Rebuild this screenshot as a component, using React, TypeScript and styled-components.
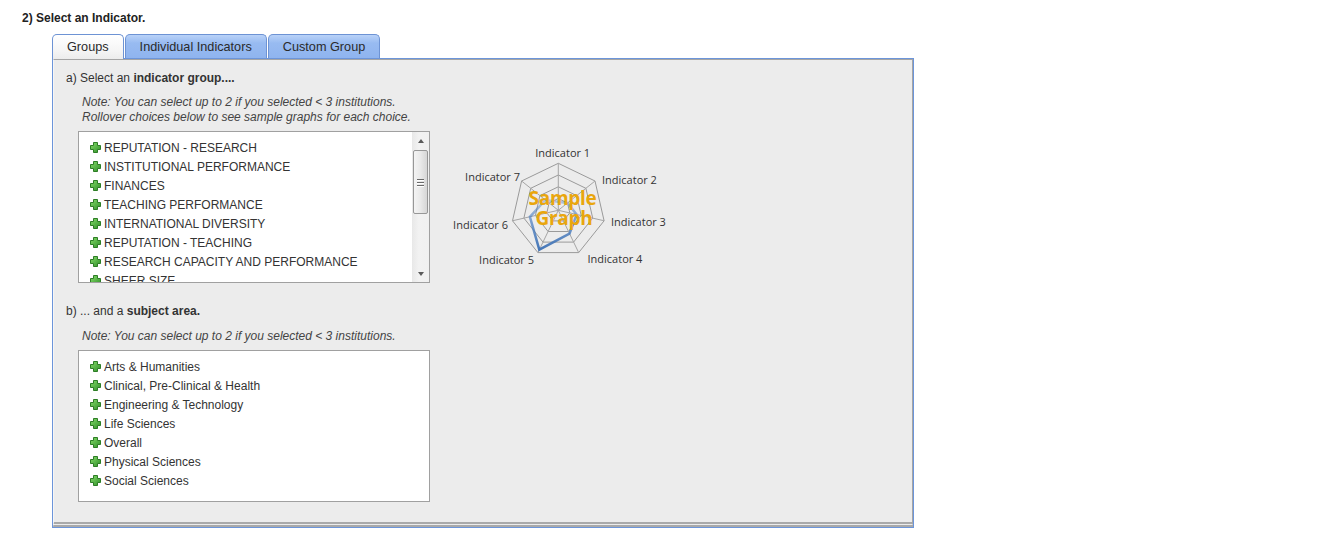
import React from "react";
import styled, { createGlobalStyle } from "styled-components";

// GLOBAL
const GlobalStyle = createGlobalStyle`
  body {
    margin: 0;
    background: #fff;
    font-family: "Liberation Sans", Arial, sans-serif;
    font-size: 12px;
    color: #333;
  }
`;

// DATA
const indicatorGroups = [
  "REPUTATION - RESEARCH",
  "INSTITUTIONAL PERFORMANCE",
  "FINANCES",
  "TEACHING PERFORMANCE",
  "INTERNATIONAL DIVERSITY",
  "REPUTATION - TEACHING",
  "RESEARCH CAPACITY AND PERFORMANCE",
  "SHEER SIZE",
  "SUSTAINABILITY",
];

const subjectAreas = [
  "Arts & Humanities",
  "Clinical, Pre-Clinical & Health",
  "Engineering & Technology",
  "Life Sciences",
  "Overall",
  "Physical Sciences",
  "Social Sciences",
];

const tabs = ["Groups", "Individual Indicators", "Custom Group"];

// STYLES
const Page = styled.div`
  padding: 11px 0 40px 22px;
`;

const Heading = styled.h2`
  margin: 0;
  font-size: 12px;
  line-height: 15px;
  font-weight: bold;
  color: #222;
`;

const TabBar = styled.div`
  display: flex;
  align-items: flex-end;
  gap: 1px;
  height: 25px;
  margin: 8px 0 -1px 30px;
  position: relative;
  z-index: 1;
`;

const Tab = styled.div<{ $active?: boolean }>`
  box-sizing: border-box;
  height: ${(p) => (p.$active ? "25px" : "24px")};
  margin-bottom: ${(p) => (p.$active ? "0" : "1px")};
  padding: 1px 14px 0;
  border: 1px solid #6d93d4;
  border-bottom: none;
  border-radius: 5px 5px 0 0;
  line-height: 22px;
  font-size: 12.7px;
  color: #2a2a2a;
  background: ${(p) =>
    p.$active
      ? "linear-gradient(#ffffff, #f6f6f6 60%, #ececec)"
      : "linear-gradient(#b9d2f8, #98bbf1 35%, #8fb4ef)"};
  cursor: pointer;
`;

const Panel = styled.div`
  margin-left: 30px;
  width: 860px;
  border: 1px solid #6c95da;
  background: #ececec;
`;

const PanelBody = styled.div`
  border-top: 1px solid #a5a5a5;
  border-right: 1px solid #a5a5a5;
  border-left: 1px solid #f6f6f6;
  border-bottom: 5px double #a9a9a9;
  padding: 11px 0 20px 12px;
`;

const SectionTitle = styled.div<{ $spaced?: boolean }>`
  margin-top: ${(p) => (p.$spaced ? "21px" : "0")};
  line-height: 15px;
  b {
    color: #333;
  }
`;

const Note = styled.div<{ $loose?: boolean }>`
  margin: ${(p) => (p.$loose ? "10px" : "9px")} 0 0 16px;
  line-height: 15px;
  font-style: italic;
  color: #444;
`;

const Row = styled.div`
  display: flex;
  align-items: flex-start;
  margin: 6px 0 0 12px;
`;

const ListBox = styled.div`
  box-sizing: border-box;
  display: flex;
  width: 352px;
  height: 152px;
  border: 1px solid #a0a0a0;
  background: #fff;
  overflow: hidden;
`;

const Items = styled.ul`
  flex: 1;
  margin: 0;
  padding: 6px 0 0 11px;
  list-style: none;
  overflow: hidden;
`;

const Item = styled.li`
  display: flex;
  align-items: center;
  gap: 3px;
  height: 19px;
  white-space: nowrap;
  color: #333;
  cursor: pointer;
`;

const ScrollBar = styled.div`
  display: flex;
  flex-direction: column;
  width: 17px;
  background: linear-gradient(90deg, #e8e8e8, #f2f2f2 40%, #f0f0f0);
`;

const ScrollButton = styled.div`
  display: flex;
  align-items: center;
  justify-content: center;
  height: 17px;
`;

const Arrow = styled.span<{ $down?: boolean }>`
  width: 0;
  height: 0;
  border-left: 3.5px solid transparent;
  border-right: 3.5px solid transparent;
  ${(p) =>
    p.$down ? "border-top: 4px solid #5a5a5a;" : "border-bottom: 4px solid #5a5a5a;"}
`;

const Thumb = styled.div`
  box-sizing: border-box;
  display: flex;
  flex-direction: column;
  align-items: center;
  justify-content: center;
  gap: 2px;
  height: 64px;
  margin: 1px 1px 0 1px;
  border: 1px solid #979797;
  border-radius: 2px;
  background: linear-gradient(90deg, #f4f4f4, #e9e9e9 50%, #d6d6d6);
`;

const Grip = styled.span`
  width: 7px;
  height: 1px;
  background: #6a6a6a;
  box-shadow: 0 1px 0 #fff;
`;

const Track = styled.div`
  flex: 1;
`;

const Chart = styled.svg`
  display: block;
  margin: 4px 0 0 10px;
  flex: none;
`;

// COMPONENTS
const PlusIcon = () => (
  <svg width="11" height="11" viewBox="0 0 11 11">
    <defs>
      <linearGradient id="plusGrad" x1="0" y1="0" x2="1" y2="1">
        <stop offset="0" stopColor="#86dc6b" />
        <stop offset="1" stopColor="#2f8f27" />
      </linearGradient>
    </defs>
    <path
      d="M3.5 0.5h4v3h3v4h-3v3h-4v-3h-3v-4h3z"
      fill="url(#plusGrad)"
      stroke="#2d7d25"
      strokeWidth="1"
      strokeLinejoin="round"
    />
  </svg>
);

const RadarChart = () => {
  const n = 7;
  const cx = 118.3;
  const cy = 75.3;
  const r = 47;
  const pt = (k: number, f: number) => {
    const a = (2 * Math.PI * k) / n;
    return [cx + r * f * Math.sin(a), cy - r * f * Math.cos(a)];
  };
  const ring = (f: number) =>
    Array.from({ length: n }, (_, k) => pt(k, f).map((v) => v.toFixed(1)).join(",")).join(" ");
  const values = [0.18, 0.25, 0.4, 0.55, 0.93, 0.62, 0.35];
  const data = values.map((v, k) => pt(k, v).map((x) => x.toFixed(1)).join(",")).join(" ");

  const labels = [
    { t: "Indicator 1", x: 122.7, y: 22, a: "middle" },
    { t: "Indicator 2", x: 162, y: 49, a: "start" },
    { t: "Indicator 3", x: 171, y: 91, a: "start" },
    { t: "Indicator 4", x: 147.5, y: 128, a: "start" },
    { t: "Indicator 5", x: 94, y: 129, a: "end" },
    { t: "Indicator 6", x: 68, y: 94, a: "end" },
    { t: "Indicator 7", x: 80, y: 46, a: "end" },
  ];

  return (
    <Chart width="240" height="140" viewBox="0 0 240 140">
      <defs>
        <linearGradient id="dataGrad" gradientUnits="userSpaceOnUse" x1="0" y1="55" x2="0" y2="120">
          <stop offset="0" stopColor="#4f80c0" stopOpacity="0.2" />
          <stop offset="0.5" stopColor="#4f80c0" stopOpacity="0.75" />
          <stop offset="1" stopColor="#3b6fb3" stopOpacity="1" />
        </linearGradient>
      </defs>
      {[1, 0.75, 0.5, 0.25].map((f) => (
        <polygon key={f} points={ring(f)} fill="none" stroke="#9a9a9a" strokeWidth="1" />
      ))}
      {Array.from({ length: n }, (_, k) => {
        const [x, y] = pt(k, 1);
        return <line key={k} x1={cx} y1={cy} x2={x} y2={y} stroke="#a5a5a5" strokeWidth="1" />;
      })}
      <polygon points={data} fill="none" stroke="url(#dataGrad)" strokeWidth="2.5" strokeLinejoin="miter" />
      {labels.map((l) => (
        <text
          key={l.t}
          x={l.x}
          y={l.y}
          textAnchor={l.a as "start" | "middle" | "end"}
          fontFamily='"Open Sans", "Noto Sans", sans-serif'
          fontSize="11"
          fill="#333"
        >
          {l.t}
        </text>
      ))}
      <g fontFamily='"Open Sans", "Noto Sans", sans-serif' fontWeight="bold" fontSize="19" fill="#e9a60e" textAnchor="middle">
        <text x="122.5" y="70" letterSpacing="-0.3">Sample</text>
        <text x="124" y="90" letterSpacing="-0.3">Graph</text>
      </g>
    </Chart>
  );
};

const OptionList: React.FC<{ items: string[]; scroll?: boolean }> = ({ items, scroll }) => (
  <ListBox>
    <Items>
      {items.map((it) => (
        <Item key={it}>
          <PlusIcon />
          {it}
        </Item>
      ))}
    </Items>
    {scroll && (
      <ScrollBar>
        <ScrollButton>
          <Arrow />
        </ScrollButton>
        <Thumb>
          <Grip />
          <Grip />
          <Grip />
        </Thumb>
        <Track />
        <ScrollButton>
          <Arrow $down />
        </ScrollButton>
      </ScrollBar>
    )}
  </ListBox>
);

const App: React.FC = () => {
  return (
    <>
      <GlobalStyle />
      <Page>
        <Heading>2) Select an Indicator.</Heading>

        <TabBar>
          {tabs.map((t, i) => (
            <Tab key={t} $active={i === 0}>
              {t}
            </Tab>
          ))}
        </TabBar>

        <Panel>
          <PanelBody>
            <SectionTitle>
              a) Select an <b>indicator group....</b>
            </SectionTitle>
            <Note>
              Note: You can select up to 2 if you selected &lt; 3 institutions.
              <br />
              Rollover choices below to see sample graphs for each choice.
            </Note>
            <Row>
              <OptionList items={indicatorGroups} scroll />
              <RadarChart />
            </Row>

            <SectionTitle $spaced>
              b) ... and a <b>subject area.</b>
            </SectionTitle>
            <Note $loose>Note: You can select up to 2 if you selected &lt; 3 institutions.</Note>
            <Row>
              <OptionList items={subjectAreas} />
            </Row>
          </PanelBody>
        </Panel>
      </Page>
    </>
  );
};

export default App;
